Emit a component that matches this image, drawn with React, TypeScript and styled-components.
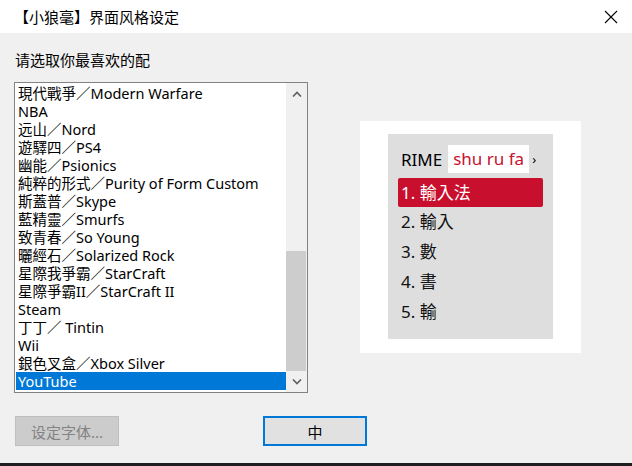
import styled, { createGlobalStyle } from "styled-components";

const GlobalStyle = createGlobalStyle`
  html, body {
    margin: 0;
    padding: 0;
    background: #f0f0f0;
  }
  * {
    box-sizing: border-box;
  }
`;

const schemes = [
  "現代戰爭／Modern Warfare",
  "NBA",
  "远山／Nord",
  "遊驛四／PS4",
  "幽能／Psionics",
  "純粹的形式／Purity of Form Custom",
  "斯蓋普／Skype",
  "藍精靈／Smurfs",
  "致青春／So Young",
  "曬經石／Solarized Rock",
  "星際我爭霸／StarCraft",
  "星際爭霸II／StarCraft II",
  "Steam",
  "丁丁／ Tintin",
  "Wii",
  "銀色叉盒／Xbox Silver",
  "YouTube",
];

const candidates = ["輸入法", "輸入", "數", "書", "輸"];

const cjk = `"Noto Sans", "Noto Sans CJK SC", sans-serif`;

const Window = styled.div`
  width: 632px;
  height: 466px;
  display: flex;
  flex-direction: column;
  background: #f0f0f0;
  font-family: ${cjk};
  color: #000;
  overflow: hidden;
`;

const TitleBar = styled.div`
  height: 33px;
  flex: none;
  display: flex;
  align-items: center;
  justify-content: space-between;
  background: #fff;
  padding: 0 14px 0 14px;
  font-size: 15px;
`;

const Close = styled.svg`
  width: 14px;
  height: 14px;
`;

const Body = styled.div`
  flex: 1;
  display: flex;
  flex-direction: column;
  padding: 12px 0 0 14px;
`;

const Label = styled.div`
  font-size: 15px;
  line-height: 30px;
  height: 37px;
  padding-left: 1px;
`;

const Row = styled.div`
  display: flex;
  align-items: flex-start;
  gap: 52px;
`;

const ListBox = styled.div`
  width: 294px;
  height: 311px;
  border: 1px solid #828282;
  background: #fff;
  display: flex;
`;

const Items = styled.div`
  flex: 1;
  padding: 1px 0 0 1px;
`;

const Item = styled.div<{ $selected?: boolean }>`
  height: 18px;
  line-height: 18px;
  font-size: 14.5px;
  padding-left: 2px;
  white-space: nowrap;
  background: ${(p) => (p.$selected ? "#0078d7" : "transparent")};
  color: ${(p) => (p.$selected ? "#fff" : "#000")};
`;

const ScrollBar = styled.div`
  width: 21px;
  flex: none;
  background: #f0f0f0;
  display: flex;
  flex-direction: column;
`;

const Arrow = styled.div`
  height: 21px;
  flex: none;
  display: flex;
  align-items: center;
  justify-content: center;
`;

const Track = styled.div`
  flex: 1;
  display: flex;
  flex-direction: column;
  justify-content: flex-end;
  padding: 0 1px 0 0;
`;

const Thumb = styled.div`
  height: 120px;
  background: #cdcdcd;
`;

const Preview = styled.div`
  margin-top: 39px;
  width: 221px;
  height: 232px;
  background: #fff;
  padding: 13px 0 0 28px;
`;

const Candidates = styled.div`
  width: 165px;
  height: 205px;
  background: #dedede;
  padding: 11px 10px 0 10px;
  font-family: "Noto Sans", "Noto Sans CJK TC", sans-serif;
`;

const Header = styled.div`
  height: 28px;
  display: flex;
  align-items: center;
  font-size: 17px;
  padding-left: 3px;
`;

const Preedit = styled.span`
  margin-left: 6px;
  height: 28px;
  line-height: 28px;
  padding: 0 5px 0 5px;
  background: #fff;
  color: #c8102e;
`;

const More = styled.span`
  margin-left: 3px;
  font-size: 13px;
`;

const Candidate = styled.div<{ $active?: boolean }>`
  margin-top: ${(p) => (p.$active ? "5px" : "0")};
  height: ${(p) => (p.$active ? "29px" : "30px")};
  line-height: ${(p) => (p.$active ? "29px" : "30px")};
  padding-left: 3px;
  font-size: 17px;
  border-radius: 2px;
  background: ${(p) => (p.$active ? "#c8102e" : "transparent")};
  color: ${(p) => (p.$active ? "#fff" : "#111")};
`;

const Buttons = styled.div`
  display: flex;
  gap: 144px;
  padding: 23px 0 0 1px;
`;

const Button = styled.button<{ $primary?: boolean }>`
  width: 104px;
  height: 30px;
  font-family: ${cjk};
  font-size: 15px;
  padding: 0;
  border: ${(p) => (p.$primary ? "2px solid #0078d7" : "1px solid #bfbfbf")};
  background: ${(p) => (p.$primary ? "#e1e1e1" : "#cccccc")};
  color: ${(p) => (p.$primary ? "#000" : "#838383")};
`;

const Taskbar = styled.div`
  height: 3px;
  flex: none;
  background: #1f1f1f;
`;

export default function App() {
  return (
    <Window>
      <GlobalStyle />
      <TitleBar>
        <span>【小狼毫】界面风格设定</span>
        <Close viewBox="0 0 14 14">
          <path d="M1 1 L13 13 M13 1 L1 13" stroke="#000" strokeWidth="1.1" />
        </Close>
      </TitleBar>
      <Body>
        <Label>请选取你最喜欢的配</Label>
        <Row>
          <ListBox>
            <Items>
              {schemes.map((s, i) => (
                <Item key={s} $selected={i === schemes.length - 1}>
                  {s}
                </Item>
              ))}
            </Items>
            <ScrollBar>
              <Arrow>
                <svg width="10" height="6" viewBox="0 0 10 6">
                  <path d="M1 5.5 L5 1.5 L9 5.5" fill="none" stroke="#606060" strokeWidth="1.6" />
                </svg>
              </Arrow>
              <Track>
                <Thumb />
              </Track>
              <Arrow>
                <svg width="10" height="6" viewBox="0 0 10 6">
                  <path d="M1 0.5 L5 4.5 L9 0.5" fill="none" stroke="#606060" strokeWidth="1.6" />
                </svg>
              </Arrow>
            </ScrollBar>
          </ListBox>
          <Preview>
            <Candidates>
              <Header>
                RIME
                <Preedit>shu ru fa</Preedit>
                <More>›</More>
              </Header>
              {candidates.map((c, i) => (
                <Candidate key={c} $active={i === 0}>
                  {i + 1}. {c}
                </Candidate>
              ))}
            </Candidates>
          </Preview>
        </Row>
        <Buttons>
          <Button disabled>设定字体...</Button>
          <Button $primary>中</Button>
        </Buttons>
      </Body>
      <Taskbar />
    </Window>
  );
}
